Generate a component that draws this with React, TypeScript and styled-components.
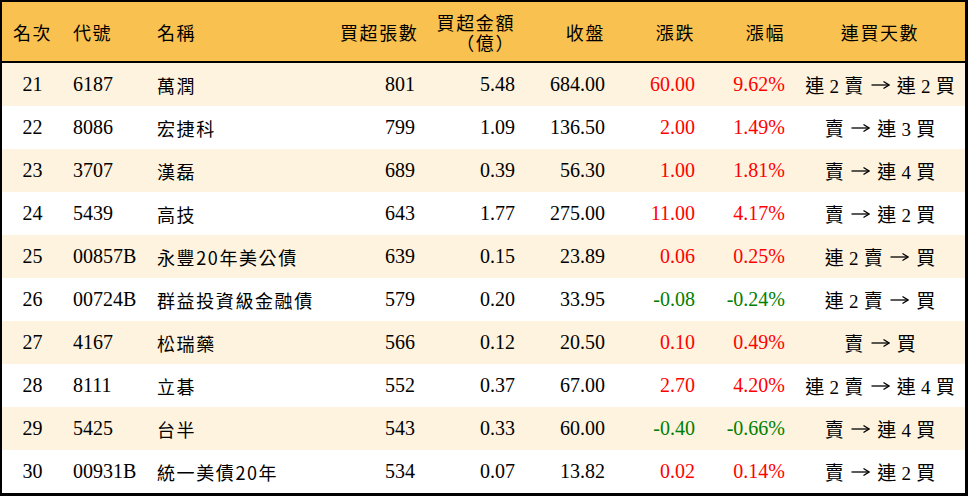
import React from "react";
import styled, { createGlobalStyle, css } from "styled-components";

const GlobalStyle = createGlobalStyle`
  html, body { margin: 0; padding: 0; background: #ffffff; }
  body { font-family: "Liberation Serif", "Noto Sans CJK TC", serif; }
`;

type Align = "left" | "right" | "center";
type Tone = "up" | "down" | "flat";
type Kind = "num" | "cjk" | "days";

const Frame = styled.div`
  width: 968px;
  box-sizing: border-box;
  border: 2px solid #000;
  border-right-width: 3px;
  border-bottom-width: 3px;
`;

const Table = styled.table`
  width: 100%;
  border-collapse: separate;
  border-spacing: 0;
  table-layout: fixed;
`;

const HeadCell = styled.th<{ $align: Align }>`
  height: 59px;
  padding: 0 10px;
  background: #f8c150;
  border-bottom: 2px solid #000;
  font-family: "Noto Sans CJK TC", "Liberation Serif", sans-serif;
  font-size: 18px;
  font-weight: 400;
  letter-spacing: 1.6px;
  line-height: 20px;
  color: #000;
  text-align: ${(p) => p.$align};
  vertical-align: middle;
  white-space: nowrap;
`;

const HeadLine = styled.span`
  display: block;
`;

const Row = styled.tr<{ $striped: boolean }>`
  background: ${(p) => (p.$striped ? "#fdf3df" : "#ffffff")};
`;

const toneColor: Record<Tone, string> = {
  up: "#ff0000",
  down: "#008000",
  flat: "#000000",
};

const Cell = styled.td<{ $align: Align; $tone: Tone; $kind: Kind }>`
  height: 43px;
  padding: 0 10px;
  text-align: ${(p) => p.$align};
  vertical-align: middle;
  white-space: nowrap;
  color: ${(p) => toneColor[p.$tone]};
  ${(p) =>
    p.$kind === "num" &&
    css`
      font-family: "Liberation Serif", "Noto Sans CJK TC", serif;
      font-size: 20px;
    `}
  ${(p) =>
    p.$kind === "cjk" &&
    css`
      font-family: "Noto Sans CJK TC", "Liberation Serif", sans-serif;
      font-size: 18px;
      letter-spacing: 1.6px;
    `}
  ${(p) =>
    p.$kind === "days" &&
    css`
      font-family: "Liberation Serif", "Noto Sans CJK TC", serif;
      font-size: 19px;
      word-spacing: 0.5px;
    `}
`;

const ArrowSvg = styled.svg`
  width: 19px;
  height: 10px;
  margin: 0 2px;
  vertical-align: 3px;
`;

const Arrow = () => (
  <ArrowSvg viewBox="0 0 19 10" aria-label="→">
    <path d="M0.5 5 H17.5" stroke="#000" strokeWidth="1.3" fill="none" />
    <path d="M12.5 1.5 L18 5 L12.5 8.5" stroke="#000" strokeWidth="1.3" fill="none" strokeLinejoin="miter" />
  </ArrowSvg>
);

const widths = [61, 84, 183, 95, 100, 90, 90, 90, 170];

const headers: { label: React.ReactNode; align: Align }[] = [
  { label: "名次", align: "center" },
  { label: "代號", align: "left" },
  { label: "名稱", align: "left" },
  { label: "買超張數", align: "right" },
  {
    label: (
      <>
        <HeadLine>買超金額</HeadLine>
        <HeadLine>（億）</HeadLine>
      </>
    ),
    align: "right",
  },
  { label: "收盤", align: "right" },
  { label: "漲跌", align: "right" },
  { label: "漲幅", align: "right" },
  { label: "連買天數", align: "center" },
];

type Item = {
  rank: string;
  code: string;
  name: string;
  lots: string;
  amount: string;
  close: string;
  change: string;
  pct: string;
  from: string;
  to: string;
};

const rows: Item[] = [
  { rank: "21", code: "6187", name: "萬潤", lots: "801", amount: "5.48", close: "684.00", change: "60.00", pct: "9.62%", from: "連 2 賣", to: "連 2 買" },
  { rank: "22", code: "8086", name: "宏捷科", lots: "799", amount: "1.09", close: "136.50", change: "2.00", pct: "1.49%", from: "賣", to: "連 3 買" },
  { rank: "23", code: "3707", name: "漢磊", lots: "689", amount: "0.39", close: "56.30", change: "1.00", pct: "1.81%", from: "賣", to: "連 4 買" },
  { rank: "24", code: "5439", name: "高技", lots: "643", amount: "1.77", close: "275.00", change: "11.00", pct: "4.17%", from: "賣", to: "連 2 買" },
  { rank: "25", code: "00857B", name: "永豐20年美公債", lots: "639", amount: "0.15", close: "23.89", change: "0.06", pct: "0.25%", from: "連 2 賣", to: "買" },
  { rank: "26", code: "00724B", name: "群益投資級金融債", lots: "579", amount: "0.20", close: "33.95", change: "-0.08", pct: "-0.24%", from: "連 2 賣", to: "買" },
  { rank: "27", code: "4167", name: "松瑞藥", lots: "566", amount: "0.12", close: "20.50", change: "0.10", pct: "0.49%", from: "賣", to: "買" },
  { rank: "28", code: "8111", name: "立碁", lots: "552", amount: "0.37", close: "67.00", change: "2.70", pct: "4.20%", from: "連 2 賣", to: "連 4 買" },
  { rank: "29", code: "5425", name: "台半", lots: "543", amount: "0.33", close: "60.00", change: "-0.40", pct: "-0.66%", from: "賣", to: "連 4 買" },
  { rank: "30", code: "00931B", name: "統一美債20年", lots: "534", amount: "0.07", close: "13.82", change: "0.02", pct: "0.14%", from: "賣", to: "連 2 買" },
];

const toneOf = (v: string): Tone => (v.startsWith("-") ? "down" : "up");

export default function App() {
  return (
    <>
      <GlobalStyle />
      <Frame>
        <Table>
          <colgroup>
            {widths.map((w, i) => (
              <col key={i} style={{ width: w }} />
            ))}
          </colgroup>
          <thead>
            <tr>
              {headers.map((h, i) => (
                <HeadCell key={i} $align={h.align}>
                  {h.label}
                </HeadCell>
              ))}
            </tr>
          </thead>
          <tbody>
            {rows.map((r, i) => (
              <Row key={r.rank} $striped={i % 2 === 0}>
                <Cell $align="center" $tone="flat" $kind="num">{r.rank}</Cell>
                <Cell $align="left" $tone="flat" $kind="num">{r.code}</Cell>
                <Cell $align="left" $tone="flat" $kind="cjk">{r.name}</Cell>
                <Cell $align="right" $tone="flat" $kind="num">{r.lots}</Cell>
                <Cell $align="right" $tone="flat" $kind="num">{r.amount}</Cell>
                <Cell $align="right" $tone="flat" $kind="num">{r.close}</Cell>
                <Cell $align="right" $tone={toneOf(r.change)} $kind="num">{r.change}</Cell>
                <Cell $align="right" $tone={toneOf(r.pct)} $kind="num">{r.pct}</Cell>
                <Cell $align="center" $tone="flat" $kind="days">
                  {r.from} <Arrow /> {r.to}
                </Cell>
              </Row>
            ))}
          </tbody>
        </Table>
      </Frame>
    </>
  );
}
